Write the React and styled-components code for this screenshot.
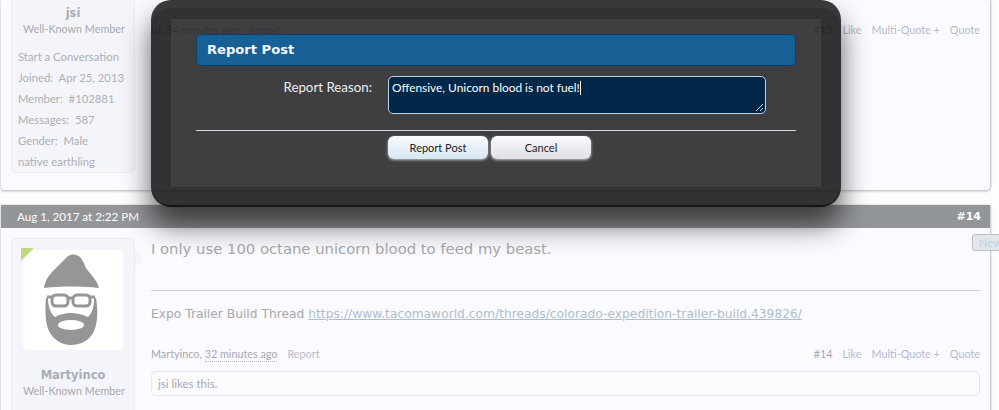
import React from 'react'
import styled, { createGlobalStyle } from 'styled-components'

const GlobalStyle = createGlobalStyle`
  html, body {
    margin: 0;
    padding: 0;
    background: #fdfdfe;
    overflow: hidden;
  }
  * { box-sizing: border-box; }
`

const Page = styled.div`
  position: relative;
  width: 999px;
  height: 410px;
  overflow: hidden;
  padding-left: 1px;
  font-family: Lato, "Noto Sans", sans-serif;
  font-size: 12px;
  color: #aaaab0;
`

const Thread = styled.div`
  width: 989px;
  display: flex;
  flex-direction: column;
  gap: 15px;
`

const Post = styled.article`
  background: #fafaff;
  border-radius: 0 0 4px 4px;
  box-shadow: 0 1px 3px #b8b8bc, 1px 0 2px #d0d0d6;
  height: ${p => p.$height}px;
`

const PostDate = styled.header`
  height: 23px;
  padding: 0 9px 0 16px;
  background: #939699;
  color: #fff;
  display: flex;
  align-items: center;
  justify-content: space-between;
  font-size: 11.6px;
`

const PostNumber = styled.b`
  font-family: "DejaVu Sans", sans-serif;
  font-size: 11px;
`

const PostBody = styled.div`
  display: flex;
  align-items: flex-start;
  padding: ${p => p.$top}px 10px 0 10px;
`

const Sidebar = styled.aside`
  position: relative;
  flex: none;
  width: 124px;
  height: ${p => p.$height}px;
  margin-top: ${p => p.$offset || 0}px;
  padding: 11px 11px 0;
  background: #f3f5fb;
  border: 1px solid #e8ecf6;
  border-radius: 5px;
  text-align: center;
`

const Pointer = styled.span`
  position: absolute;
  top: 11px;
  left: 123px;
  border-style: solid;
  border-width: 9px 0 9px 9px;
  border-color: transparent transparent transparent #f3f5fb;
`

const Avatar = styled.div`
  position: relative;
  width: 100px;
  height: 100px;
  background: #fff;
  border-radius: 4px;
  &::before {
    content: "";
    position: absolute;
    top: -2px;
    left: -2px;
    border-style: solid;
    border-width: 13px 13px 0 0;
    border-color: #bfd981 transparent transparent transparent;
  }
`

const AvatarArt = styled.svg`
  display: block;
`

const UserName = styled.div`
  margin-top: ${p => p.$top || 0}px;
  font-family: "DejaVu Sans", sans-serif;
  font-size: 11.5px;
  font-weight: 700;
  line-height: 16px;
  color: #a9adb8;
`

const UserTitle = styled.div`
  font-size: 10.8px;
  line-height: 16px;
  white-space: nowrap;
  color: #a8a8ac;
`

const InfoList = styled.dl`
  margin: 9px 0 0 -5px;
  text-align: left;
  font-size: 11.3px;
`

const InfoRow = styled.div`
  height: 21px;
  line-height: 21px;
  white-space: nowrap;
  color: #b0b0b4;
`

const Main = styled.div`
  flex: 1;
  min-width: 0;
  margin-left: 16px;
  padding-top: ${p => p.$top || 0}px;
`

const Message = styled.p`
  margin: 0;
  height: 52px;
  font-family: "DejaVu Sans", sans-serif;
  font-size: 14.8px;
  line-height: 21px;
  color: #a8a8ac;
`

const Signature = styled.div`
  border-top: 1px solid #cfcfd4;
  padding-top: 14px;
  height: 55px;
  font-family: "DejaVu Sans", sans-serif;
  font-size: 12.27px;
  line-height: 18px;
  color: #a8a8ac;
`

const SigLink = styled.a`
  color: #aebfcb;
  text-decoration: underline;
`

const Footer = styled.div`
  display: flex;
  justify-content: space-between;
  height: 17px;
  line-height: 17px;
  font-size: 10.8px;
  white-space: nowrap;
`

const FooterGroup = styled.div`
  display: flex;
  gap: ${p => p.$gap}px;
`

const When = styled.span`
  color: #a8a8ac;
  ${p => p.$dotted && 'border-bottom: 1px dotted #b8b8bc; line-height: 14px; height: 15px; display: inline-block;'}
`

const FooterLink = styled.a`
  color: #b3bcc8;
`

const Likes = styled.div`
  margin-top: 9px;
  height: 25px;
  padding-left: 6px;
  line-height: 23px;
  font-size: 11.5px;
  color: #a8a8ac;
  background: #fbfbfe;
  border: 1px solid #e6e6ee;
  border-radius: 5px;
`

const NewTab = styled.div`
  position: absolute;
  top: 234px;
  left: 972px;
  width: 40px;
  height: 17px;
  padding-left: 6px;
  line-height: 15px;
  font-size: 11px;
  color: #c2d0da;
  background: #e3e7ec;
  border: 1px solid #b9c0c7;
  border-radius: 3px;
`

const Modal = styled.section`
  position: absolute;
  top: 0;
  left: 151px;
  width: 690px;
  height: 207px;
  padding: 19px 20px 20px;
  border-radius: 20px;
  background: rgba(14, 14, 16, 0.85);
  box-shadow:
    inset 0 8px 0 rgba(255, 255, 255, 0.035),
    inset 0 -2px 1px rgba(0, 0, 0, 0.35),
    0 18px 28px rgba(0, 0, 0, 0.62);
`

const ModalInner = styled.div`
  height: 168px;
  padding: 15px 25px 0;
  background: rgba(255, 255, 255, 0.065);
`

const ModalTitle = styled.h2`
  margin: 0;
  height: 32px;
  padding-left: 10px;
  line-height: 30px;
  font-family: "DejaVu Sans", sans-serif;
  font-size: 13.1px;
  font-weight: 700;
  color: #f4f8fb;
  background: #166096;
  border: 1px solid #0c3f66;
  border-radius: 5px;
`

const FormRow = styled.div`
  display: flex;
  margin-top: 10px;
`

const ReasonLabel = styled.label`
  width: 176px;
  padding-top: 2px;
  text-align: right;
  font-size: 13.3px;
  line-height: 18px;
  color: #eee;
`

const ReasonBox = styled.div`
  position: relative;
  width: 378px;
  height: 38px;
  margin-left: 16px;
  padding: 2px 3px;
  font-size: 11.9px;
  line-height: 17px;
  color: #fff;
  background: #022849;
  border: 1px solid #bcd2e2;
  border-radius: 5px;
`

const Caret = styled.span`
  display: inline-block;
  width: 1px;
  height: 14px;
  vertical-align: -3px;
  background: #fff;
`

const Grip = styled.svg`
  position: absolute;
  right: 1px;
  bottom: 1px;
`

const Divider = styled.hr`
  margin: 16px 0 0;
  height: 1px;
  border: 0;
  background: #d3dae2;
`

const Buttons = styled.div`
  display: flex;
  gap: 3px;
  margin: 5px 0 0 192px;
`

const Button = styled.button`
  width: 100px;
  height: 23px;
  padding: 0;
  font-family: inherit;
  font-size: 11px;
  color: #222;
  border: 0;
  border-radius: 6px;
  background: linear-gradient(${p => (p.$primary ? '#f9fbfd, #d6e8f4' : '#fbfafc, #e2dee8')});
  box-shadow: 0 1px 3px rgba(255, 255, 255, 0.7);
`

const MemberAvatar = () => (
  <Avatar>
    <AvatarArt width="100" height="100" viewBox="0 0 100 100">
      <path
        fill="#969696"
        d="M21 38 C22 30 27 24 31 20 C36 15 40 11 43 8 C46 4 52 3 57 7 C60 10 61 14 63 18 C67 24 74 30 76 38 C58 36 38 36 21 38 Z"
      />
      <path
        fill="#969696"
        d="M23 48 C22 60 22 72 26 81 C31 91 40 95 48 95 C58 95 67 90 71 81 C75 72 75 60 73 48 L71 48 C71 58 69 63 65 67 C58 64 53 63 48 63 C43 63 37 64 32 67 C27 63 25 56 25 48 Z"
      />
      <ellipse cx="48" cy="75" rx="13" ry="5" fill="#fff" />
      <g fill="none" stroke="#969696" strokeWidth="3">
        <rect x="29" y="45" width="16" height="11" rx="4" />
        <rect x="50" y="45" width="17" height="11" rx="4" />
        <path d="M45 48 H50 M24 47 H29 M67 47 H72" />
      </g>
    </AvatarArt>
  </Avatar>
)

const PostFooter = ({ author, when, number, dotted }) => (
  <Footer>
    <FooterGroup $gap={10}>
      <span>
        <When>{author},</When> <When $dotted={dotted}>{when}</When>
      </span>
      <FooterLink>Report</FooterLink>
    </FooterGroup>
    <FooterGroup $gap={10}>
      <When>#{number}</When>
      <FooterLink>Like</FooterLink>
      <FooterLink>Multi-Quote +</FooterLink>
      <FooterLink>Quote</FooterLink>
    </FooterGroup>
  </Footer>
)

export default function App() {
  return (
    <Page>
      <GlobalStyle />
      <Thread>
        <Post $height={190}>
          <PostBody $top={0}>
            <Sidebar $height={183} $offset={-10}>
              <UserName $top={3}>jsi</UserName>
              <UserTitle>Well-Known Member</UserTitle>
              <InfoList>
                <InfoRow>Start a Conversation</InfoRow>
                <InfoRow>Joined:&nbsp; Apr 25, 2013</InfoRow>
                <InfoRow>Member:&nbsp; #102881</InfoRow>
                <InfoRow>Messages:&nbsp; 587</InfoRow>
                <InfoRow>Gender:&nbsp; Male</InfoRow>
                <InfoRow>native earthling</InfoRow>
              </InfoList>
            </Sidebar>
            <Main $top={21}>
              <PostFooter author="jsi" when="34 minutes ago" number={13} />
            </Main>
          </PostBody>
        </Post>
        <Post $height={230}>
          <PostDate>
            <span>Aug 1, 2017 at 2:22 PM</span>
            <PostNumber>#14</PostNumber>
          </PostDate>
          <PostBody $top={10}>
            <Sidebar $height={200}>
              <Pointer />
              <MemberAvatar />
              <UserName $top={17}>Martyinco</UserName>
              <UserTitle>Well-Known Member</UserTitle>
            </Sidebar>
            <Main>
              <Message>I only use 100 octane unicorn blood to feed my beast.</Message>
              <Signature>
                Expo Trailer Build Thread{' '}
                <SigLink>https://www.tacomaworld.com/threads/colorado-expedition-trailer-build.439826/</SigLink>
              </Signature>
              <PostFooter author="Martyinco" when="32 minutes ago" number={14} dotted />
              <Likes>jsi likes this.</Likes>
            </Main>
          </PostBody>
        </Post>
      </Thread>
      <NewTab>New</NewTab>
      <Modal>
        <ModalInner>
          <ModalTitle>Report Post</ModalTitle>
          <FormRow>
            <ReasonLabel>Report Reason:</ReasonLabel>
            <ReasonBox>
              Offensive, Unicorn blood is not fuel!<Caret />
              <Grip width="10" height="10" viewBox="0 0 10 10">
                <path d="M9 2 L2 9 M9 6 L6 9" stroke="#c8d4dc" strokeWidth="1" fill="none" />
              </Grip>
            </ReasonBox>
          </FormRow>
          <Divider />
          <Buttons>
            <Button $primary>Report Post</Button>
            <Button>Cancel</Button>
          </Buttons>
        </ModalInner>
      </Modal>
    </Page>
  )
}
